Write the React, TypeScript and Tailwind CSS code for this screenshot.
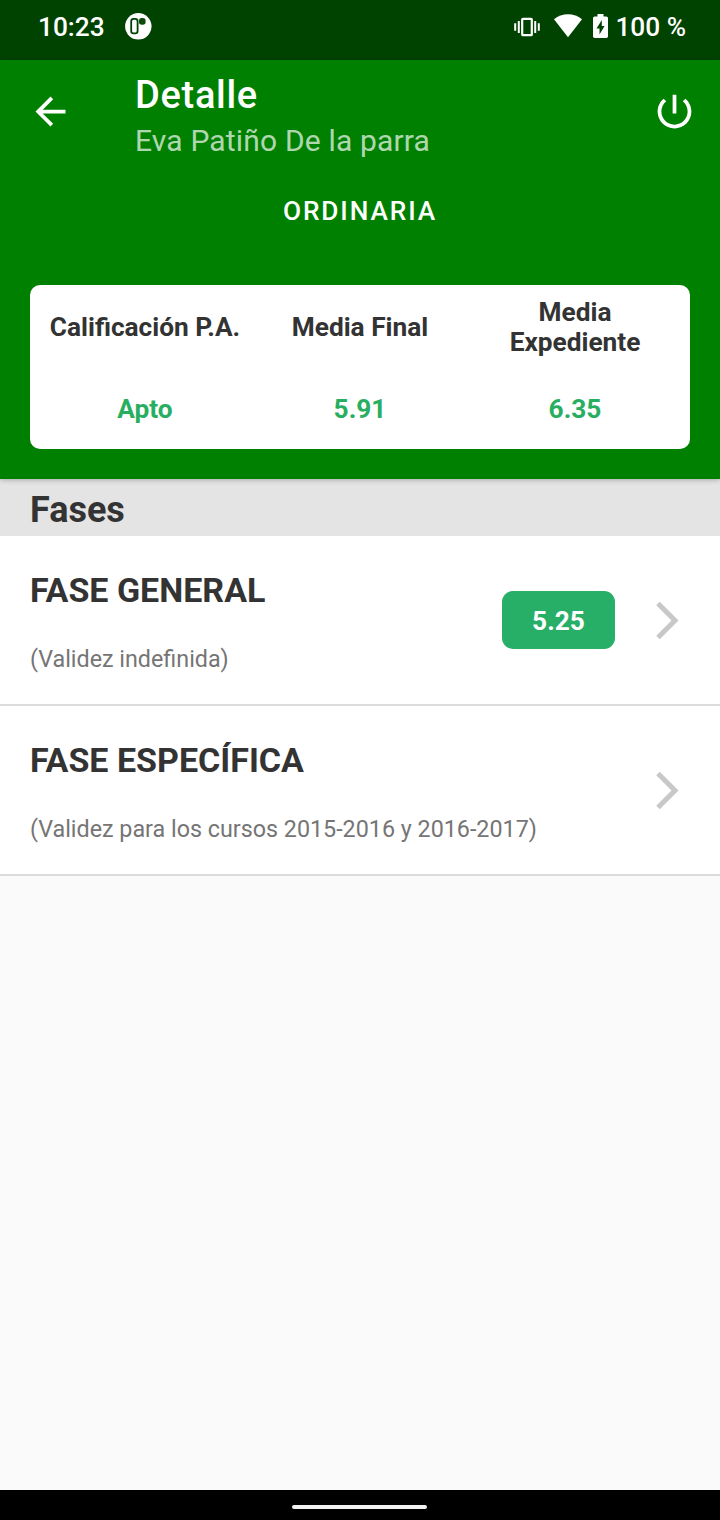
type Phase = {
  id: string;
  title: string;
  validity: string;
  grade?: string;
};

const summary = [
  { label: "Calificación P.A.", value: "Apto" },
  { label: "Media Final", value: "5.91" },
  { label: "Media Expediente", value: "6.35" }
];

const phases: Phase[] = [
  { id: "general", title: "FASE GENERAL", validity: "(Validez indefinida)", grade: "5.25" },
  {
    id: "specific",
    title: "FASE ESPECÍFICA",
    validity: "(Validez para los cursos 2015-2016 y 2016-2017)"
  }
];

function StatusBar() {
  return (
    <div className="flex h-[60px] items-start bg-[#004200] pt-3 pr-[34px] pl-[38px] text-[26.25px] leading-[30px] font-medium text-white">
      <span>10:23</span>
      <svg className="ml-[20px] h-7 w-7" viewBox="0 0 28 28">
        <circle cx="13.3" cy="14.3" r="13.2" fill="#fff" />
        <rect x="6.2" y="6.8" width="6.4" height="14.6" rx="2.4" fill="none" stroke="#004200" strokeWidth="1.8" />
        <rect x="14" y="6" width="6.6" height="6.8" rx="2.8" fill="#0b4a0b" />
      </svg>
      <div className="ml-auto flex">
        <svg className="h-[30px] w-[26px]" viewBox="0 0 26 30" fill="none" stroke="#fff">
          <rect x="8.2" y="6.8" width="9.6" height="16.4" rx="0.8" strokeWidth="2.2" />
          <path d="M1.2 11.2v7.6M24.8 11.2v7.6" strokeWidth="2" />
          <path d="M4.8 9v12M21.2 9v12" strokeWidth="2" />
        </svg>
        <svg className="ml-[14px] h-[30px] w-[28px]" viewBox="0 0 28 30" fill="#fff">
          <path d="M14 25.3 0 7.2C4 4.1 8.8 2.3 14 2.3s10 1.8 14 4.9z" />
        </svg>
        <svg className="ml-[11px] h-[30px] w-[15px]" viewBox="0 0 15 30">
          <path
            fill="#fff"
            d="M4.5 2h6v2.4h2.8c.9 0 1.7.8 1.7 1.7v18.2c0 .9-.8 1.7-1.7 1.7H1.7C.8 26 0 25.2 0 24.3V6.1c0-.9.8-1.7 1.7-1.7h2.8z"
          />
          <path fill="#004200" d="M8.8 8 3.5 16.5H6.5V22.5L11.6 14H8.8z" />
        </svg>
        <span className="ml-[7px]">100 %</span>
      </div>
    </div>
  );
}

function Toolbar() {
  return (
    <header className="flex h-[105px] items-start pt-[29px] pr-[23px] pl-[27.5px]">
      <button aria-label="Volver" className="h-[45px] w-[45px]">
        <svg className="h-[45px] w-[45px]" viewBox="0 0 24 24" fill="#fff">
          <path d="M20 11H7.83l5.59-5.59L12 4l-8 8 8 8 1.41-1.41L7.83 13H20v-2z" />
        </svg>
      </button>
      <div className="-mt-[15px] ml-[62.5px] flex-1">
        <h1 className="text-[38px] leading-[43px] font-medium tracking-[0.7px] text-white">Detalle</h1>
        <p className="text-[30px] leading-[48px] tracking-[0.17px] text-white/70">Eva Patiño De la parra</p>
      </div>
      <button aria-label="Salir" className="h-[45px] w-[45px]">
        <svg className="h-[45px] w-[45px]" viewBox="0 0 24 24" fill="#fff">
          <path d="M13 3h-2v10h2V3zm4.83 2.17l-1.42 1.42C17.99 7.86 19 9.81 19 12c0 3.87-3.13 7-7 7s-7-3.13-7-7c0-2.19 1.01-4.14 2.58-5.42L6.17 5.17C4.23 6.82 3 9.26 3 12c0 4.97 4.03 9 9 9s9-4.03 9-9c0-2.74-1.23-5.18-3.17-6.83z" />
        </svg>
      </button>
    </header>
  );
}

function SummaryCard() {
  return (
    <div className="mx-[30px] mt-[29px] grid h-[164px] grid-cols-3 rounded-[10px] bg-white px-[7.5px] pt-3 text-center text-[26.25px] leading-[30px] font-bold">
      {summary.map((item) => (
        <div key={item.label} className="flex flex-col items-center">
          <div className="flex h-[60px] items-center px-[11px] text-[#333]">{item.label}</div>
          <div className="mt-[37px] text-[#27ae60]">{item.value}</div>
        </div>
      ))}
    </div>
  );
}

function PhaseRow({ phase }: { phase: Phase }) {
  return (
    <li className="flex h-[170px] items-center border-b-2 border-[#dcdcdc] bg-white pr-[31px] pl-[30px]">
      <div className="flex-1 pt-1">
        <h3 className="text-[34px] leading-[40px] font-bold text-[#333]">{phase.title}</h3>
        <p className="mt-[34px] text-[23.3px] leading-[30px] text-[#757575]">{phase.validity}</p>
      </div>
      {phase.grade && (
        <span className="mr-[31px] flex h-[58px] w-[113px] items-center justify-center rounded-[11px] bg-[#27ae67] pt-[2px] text-[26.25px] leading-[30px] font-bold text-white">
          {phase.grade}
        </span>
      )}
      <svg className="h-[46px] w-[43px]" viewBox="0 0 43 46" fill="none" stroke="#c8c8c8" strokeWidth="5">
        <path d="M12 6.5 29 23.5 12 40.5" />
      </svg>
    </li>
  );
}

export default function App() {
  return (
    <div className="flex h-[1520px] w-[720px] flex-col bg-[#fafafa] font-['Roboto',sans-serif]">
      <StatusBar />
      <div className="relative h-[419px] bg-[#008000] shadow-[0_1px_5px_rgba(0,0,0,0.25)]">
        <Toolbar />
        <div className="flex h-[91px] items-center justify-center pt-[1px] text-[26.25px] leading-[30px] font-medium tracking-[1.9px] text-white">
          ORDINARIA
        </div>
        <SummaryCard />
      </div>
      <h2 className="h-[57px] bg-[#e4e4e4] pl-[30px] text-[36px] leading-[62px] font-bold text-[#333]">
        Fases
      </h2>
      <ul>
        {phases.map((phase) => (
          <PhaseRow key={phase.id} phase={phase} />
        ))}
      </ul>
      <div className="mt-auto flex h-[30px] bg-black pt-[15px] pl-[292px]">
        <div className="h-1 w-[135px] rounded-full bg-[#f1f1f1]" />
      </div>
    </div>
  );
}
